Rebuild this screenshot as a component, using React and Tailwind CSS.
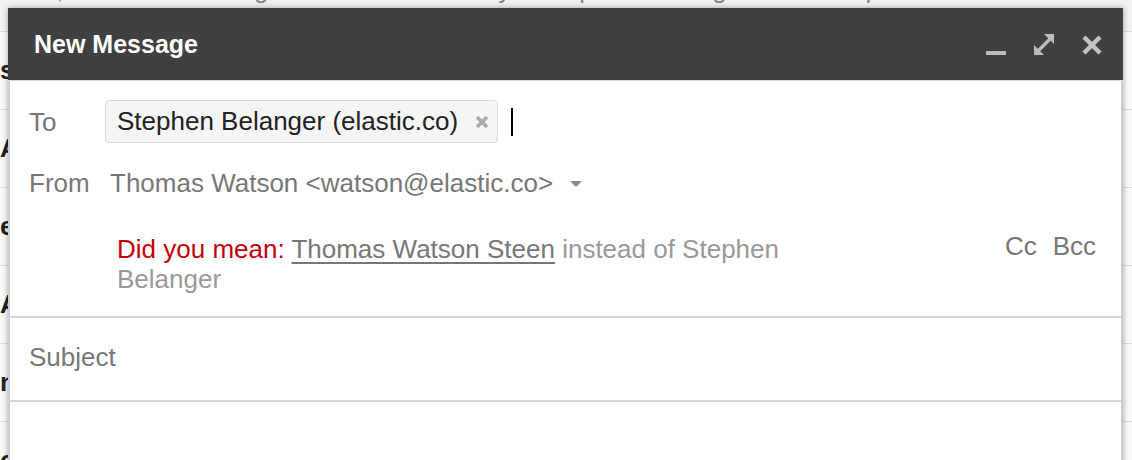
import React from "react";

function MinimizeIcon() {
  return (
    <svg width="20" height="21" viewBox="0 0 20 21">
      <rect x="0" y="17" width="20" height="4" fill="#bdbdbd" />
    </svg>
  );
}

function ExpandIcon() {
  return (
    <svg width="20" height="21" viewBox="0 0 20 21">
      <line x1="4" y1="17" x2="16" y2="5" stroke="#bdbdbd" strokeWidth="3.2" />
      <polygon points="20,0 20,10 10,0" fill="#bdbdbd" />
      <polygon points="0,21 0,11 10,21" fill="#bdbdbd" />
    </svg>
  );
}

function CloseIcon() {
  return (
    <svg width="20" height="21" viewBox="0 0 20 21">
      <line x1="2" y1="3" x2="18" y2="19" stroke="#c4c4c4" strokeWidth="4.4" />
      <line x1="18" y1="3" x2="2" y2="19" stroke="#c4c4c4" strokeWidth="4.4" />
    </svg>
  );
}

// rows of the inbox that peek out behind the compose window
const rows = ["s", "A", "e", "A", "n", "c"];

export default function App() {
  return (
    <div className="relative w-[1132px] h-[460px] overflow-hidden bg-white font-['Liberation_Sans',Arial,sans-serif]">
      {/* BACKGROUND INBOX */}
      <div className="h-[32px] bg-[#f2f2f2] overflow-hidden border-b border-[#dcdcdc]">
        <div className="-mt-[24px] pl-[20px] text-[26px] leading-[26px] text-[#888] whitespace-nowrap">
          ten, I will be receiving this email because you requested a log in to the request tracker for more
        </div>
      </div>
      {rows.map((ch, i) => (
        <div key={i} className="h-[78px] bg-[#fafafa] border-b border-[#dcdcdc] pt-[23px]">
          <div className="text-[26px] leading-[30px] font-bold text-[#222]">{ch}</div>
        </div>
      ))}

      {/* COMPOSE WINDOW */}
      <div className="absolute left-[8px] top-[8px] w-[1115px] h-[470px] flex flex-col bg-white shadow-[0_0_6px_rgba(0,0,0,0.35)]">
        <div className="h-[72px] bg-[#404040] flex items-center justify-between pl-[26px] pr-[21px]">
          <div className="text-[25px] leading-[30px] font-bold text-white">New Message</div>
          <div className="flex items-center gap-[28px]">
            <MinimizeIcon />
            <ExpandIcon />
            <CloseIcon />
          </div>
        </div>
        <div className="h-[1px] bg-[#d9d9d9]" />

        <div className="flex-1 border-x-2 border-[#cdcdcd] text-[26px]">
          {/* TO */}
          <div className="flex items-center pl-[19px] pt-[19px]">
            <div className="w-[76px] leading-[30px] text-[#777]">To</div>
            <div className="h-[43px] flex items-center pl-[11px] pr-[8px] bg-[#f5f5f5] border border-[#d9d9d9] rounded-[4px]">
              <span className="leading-[41px] text-[#222] whitespace-nowrap">Stephen Belanger (elastic.co)</span>
              <svg className="ml-[17px]" width="14" height="14" viewBox="0 0 14 14">
                <line x1="2" y1="2" x2="12" y2="12" stroke="#aaa" strokeWidth="3.6" />
                <line x1="12" y1="2" x2="2" y2="12" stroke="#aaa" strokeWidth="3.6" />
              </svg>
            </div>
            <div className="ml-[13px] w-[2px] h-[28px] bg-black" />
          </div>

          {/* FROM */}
          <div className="flex items-center pl-[19px] mt-[25px] leading-[30px] text-[#777]">
            <div className="w-[81px]">From</div>
            <div className="whitespace-nowrap">Thomas Watson &lt;watson@elastic.co&gt;</div>
            <svg className="ml-[17px] mt-[2px]" width="12" height="6" viewBox="0 0 12 6">
              <polygon points="0,0 12,0 6,6" fill="#8a8a8a" />
            </svg>
          </div>

          {/* SUGGESTION + CC/BCC */}
          <div className="flex justify-between items-start mt-[36px] pr-[25px]">
            <div className="pl-[107px] w-[800px] leading-[30px] text-[#999]">
              <span className="text-[#c5000b]">Did you mean: </span>
              <span className="text-[#777] underline underline-offset-[4px] decoration-[2px]">Thomas Watson Steen</span>{" "}
              instead of Stephen Belanger
            </div>
            <div className="flex gap-[16px] leading-[24px] text-[#777]">
              <span>Cc</span>
              <span>Bcc</span>
            </div>
          </div>

          <div className="mt-[22px] h-[2px] bg-[#d6d6d6]" />

          {/* SUBJECT */}
          <div className="pl-[19px] pt-[24px] pb-[28px] leading-[30px] text-[#777]">Subject</div>

          <div className="h-[2px] bg-[#d6d6d6]" />
        </div>
      </div>
    </div>
  );
}
